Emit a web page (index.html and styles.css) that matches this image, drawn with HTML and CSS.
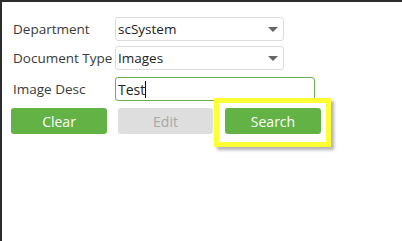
FILE: index.html
```html
<!DOCTYPE html>
<html lang="en">
<head>
    <meta charset="UTF-8">
    <meta name="viewport" content="width=device-width, initial-scale=1.0">
    <title>Image Search</title>
    <link rel="stylesheet" href="styles.css">
</head>
<body>
    <div class="search-panel">
        <div class="form-row">
            <label class="form-label">Department</label>
            <div class="select-box">
                <span class="select-value">scSystem</span>
                <span class="select-arrow"></span>
            </div>
        </div>
        <div class="form-row">
            <label class="form-label">Document Type</label>
            <div class="select-box">
                <span class="select-value">Images</span>
                <span class="select-arrow"></span>
            </div>
        </div>
        <div class="form-row form-row-input">
            <label class="form-label">Image Desc</label>
            <div class="text-input">Test<span class="caret"></span></div>
        </div>

        <div class="button-row">
            <button class="btn btn-green btn-clear">Clear</button>
            <button class="btn btn-disabled btn-edit" disabled>Edit</button>
            <div class="highlight-wrap">
                <button class="btn btn-green btn-search">Search</button>
                <div class="highlight"></div>
            </div>
        </div>
    </div>
</body>
</html>
```

FILE: styles.css
```css
html, body {
    height: 100%;
}

body {
    margin: 0;
    background: #fff;
    border-top: 2px solid #2d2d30;
    border-left: 2px solid #2d2d30;
    box-sizing: border-box;
    font-family: "Open Sans", Arial, sans-serif;
    color: #3a3a3a;
}

.search-panel {
    padding: 15px 0 0 9px;
}

.form-row {
    display: flex;
    align-items: center;
    margin-bottom: 5px;
}

.form-row-input {
    margin-top: 7px;
    margin-bottom: 7px;
}

.form-label {
    width: 102px;
    padding-left: 2px;
    font-size: 13.5px;
    white-space: nowrap;
}

.select-box {
    display: flex;
    align-items: center;
    justify-content: space-between;
    width: 169px;
    height: 24px;
    box-sizing: border-box;
    padding: 0 4px 0 2px;
    border: 1px solid #dcdcdc;
    border-radius: 3px;
    font-size: 13.5px;
    color: #222;
}

.select-arrow {
    width: 0;
    height: 0;
    margin-right: 1px;
    border-left: 5px solid transparent;
    border-right: 5px solid transparent;
    border-top: 5px solid #666;
}

.text-input {
    display: flex;
    align-items: center;
    width: 200px;
    height: 24px;
    box-sizing: border-box;
    padding: 0 2px;
    border: 1px solid #6ab04c;
    border-radius: 3px;
    font-size: 14px;
    color: #222;
}

.caret {
    display: inline-block;
    width: 1px;
    height: 17px;
    background: #111;
}

.button-row {
    display: flex;
    align-items: center;
}

.btn {
    height: 26px;
    padding: 0;
    border: none;
    border-radius: 3px;
    font-family: "Open Sans", Arial, sans-serif;
    font-size: 14px;
    cursor: pointer;
}

.btn-green {
    background: #62b246;
    color: #fff;
}

.btn-disabled {
    background: #dedede;
    color: #a8a8a8;
    cursor: not-allowed;
}

.btn-clear {
    width: 96px;
}

.btn-edit {
    width: 95px;
    margin-left: 11px;
}

.highlight-wrap {
    position: relative;
    margin-left: 12px;
}

.btn-search {
    display: block;
    width: 96px;
}

.highlight {
    position: absolute;
    left: -11px;
    top: -10px;
    width: 117px;
    height: 49px;
    box-sizing: border-box;
    border: 5px solid #ffff33;
    box-shadow: 3px 3px 3px rgba(0, 0, 0, 0.3);
}
```
